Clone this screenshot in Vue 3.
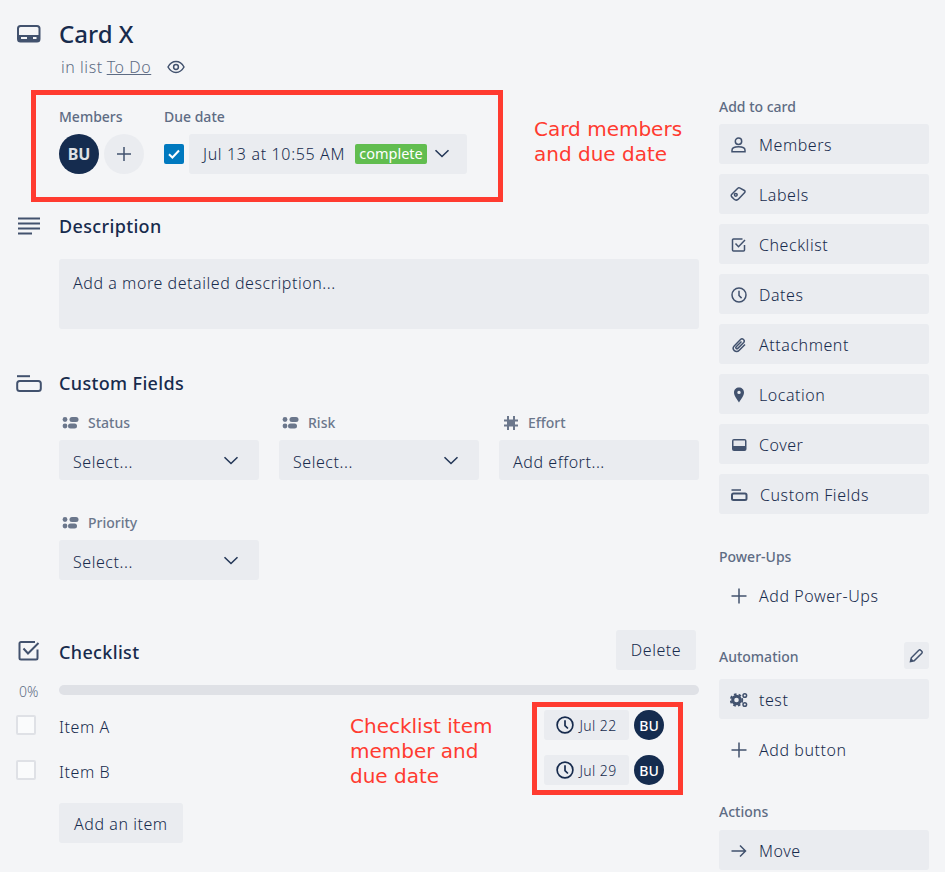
<template>
  <div class="page">
    <main class="main">
      <!-- Title -->
      <div class="row title-row">
        <svg class="gutter-icon" width="24" height="18" viewBox="0 0 24 18">
          <rect x="1" y="1" width="21.5" height="15.5" rx="2.5" class="ln-2" />
          <path d="M1 10h21.500v4.500a2 2 0 0 1-2 2H3a2 2 0 0 1-2-2z" class="fl" />
          <rect x="4" y="12" width="6" height="2" fill="#f4f5f7" />
          <rect x="16" y="12" width="3.500" height="2" fill="#f4f5f7" />
        </svg>
        <h1>Card X</h1>
      </div>
      <div class="row subtitle">
        <span></span>
        <div class="subtitle-text">
          <span>in list</span>
          <u>To Do</u>
          <svg class="eye" width="18" height="14" viewBox="0 0 18 14">
            <path d="M1 7c2-3.600 4.800-5.400 8-5.400s6 1.800 8 5.400c-2 3.600-4.800 5.400-8 5.400S3 10.600 1 7z" class="ln-15" />
            <circle cx="9" cy="7" r="2.400" class="ln-15" />
          </svg>
        </div>
      </div>

      <!-- Members and due date -->
      <div class="row meta">
        <span></span>
        <div class="meta-cols">
          <div>
            <div class="label">Members</div>
            <div class="members">
              <span class="avatar">BU</span>
              <span class="add-member">
                <svg width="16" height="16" viewBox="0 0 16 16"><path d="M8 1v14M1 8h14" class="ln-15" /></svg>
              </span>
            </div>
          </div>
          <div>
            <div class="label">Due date</div>
            <div class="due">
              <span class="check">
                <svg width="14" height="12" viewBox="0 0 14 12"><path d="M2 6.300l3.400 3.200L12 2.500" fill="none" stroke="#fff" stroke-width="2" /></svg>
              </span>
              <div class="due-btn">
                <span class="due-text">Jul 13 at 10:55 AM</span>
                <span class="complete">complete</span>
                <svg class="chevron" width="16" height="9" viewBox="0 0 16 9"><path d="M1.500 1.200L8 7.500l6.500-6.300" class="chev" /></svg>
              </div>
            </div>
          </div>
        </div>
      </div>

      <!-- Description -->
      <div class="row heading desc-heading">
        <svg class="gutter-icon" width="24" height="18" viewBox="0 0 24 18">
          <path d="M1 1.500h22M1 6.500h22M1 11.500h22M1 16.500h14" class="ln-2" />
        </svg>
        <h2>Description</h2>
      </div>
      <div class="row desc-box-row">
        <span></span>
        <div class="desc-box">Add a more detailed description...</div>
      </div>

      <!-- Custom fields -->
      <div class="row heading cf-heading">
        <svg class="gutter-icon gutter-wide" width="26" height="17" viewBox="0 0 26 17">
          <path d="M1 1.200h13" class="ln-2" />
          <rect x="1.200" y="6" width="23.600" height="10" rx="2.500" class="ln-2" />
        </svg>
        <h2>Custom Fields</h2>
      </div>
      <div class="row">
        <span></span>
        <div class="fields">
          <div v-for="f in fields" :key="f.name" class="field">
            <div class="field-label">
              <svg v-if="f.select" width="18" height="14" viewBox="0 0 18 14">
                <circle cx="3" cy="3.500" r="2.400" class="fl2" />
                <rect x="7.500" y="1" width="9" height="5" rx="2.500" class="fl2" />
                <circle cx="3" cy="10" r="2.400" class="fl2" />
                <rect x="6" y="7.500" width="9" height="5" rx="2.500" class="fl2" />
              </svg>
              <svg v-else width="18" height="14" viewBox="0 0 18 14">
                <path d="M6 0v14M12 0v14M2 4.500h14M2 9.500h14" fill="none" stroke="#6b778c" stroke-width="2" />
                <rect x="6" y="4.500" width="6" height="5" class="fl2" />
              </svg>
              <span>{{ f.name }}</span>
            </div>
            <div class="field-box">
              <span>{{ f.placeholder }}</span>
              <svg v-if="f.select" width="16" height="9" viewBox="0 0 16 9"><path d="M1.500 1.200L8 7.500l6.500-6.300" class="chev" /></svg>
            </div>
          </div>
        </div>
      </div>

      <!-- Checklist -->
      <div class="row heading checklist-heading">
        <svg class="gutter-icon gutter-check" width="22" height="20" viewBox="0 0 22 20">
          <path d="M19.500 8.500V17a1.500 1.500 0 0 1-1.500 1.500H3A1.500 1.500 0 0 1 1.500 17V2.500A1.500 1.500 0 0 1 3 1h14" class="ln-2" />
          <path d="M5.500 7.500l4.500 5L20.500 2" class="ln-2" />
        </svg>
        <div class="checklist-title">
          <h2>Checklist</h2>
          <button class="btn delete">Delete</button>
        </div>
      </div>
      <div class="row progress">
        <span class="percent">0%</span>
        <div class="bar"></div>
      </div>
      <div v-for="item in items" :key="item.name" class="row item">
        <span class="item-check"></span>
        <div class="item-body">
          <span class="item-name">{{ item.name }}</span>
          <span class="pill">
            <svg width="18" height="18" viewBox="0 0 16 16">
              <circle cx="8" cy="8" r="7" class="ln-15 dark" />
              <path d="M8 3.800V8.500l2.600 2.600" class="ln-15 dark" />
            </svg>
            {{ item.date }}
          </span>
          <span class="avatar avatar-sm">BU</span>
        </div>
      </div>
      <div class="row add-item">
        <span></span>
        <div><button class="btn">Add an item</button></div>
      </div>
    </main>

    <aside class="side">
      <h3>Add to card</h3>
      <div class="side-list">
        <div class="side-btn">
          <svg width="16" height="16" viewBox="0 0 16 16">
            <circle cx="7.500" cy="4.200" r="3.200" class="ln-15" />
            <path d="M1 14.800v-1.600C1 10.700 4 9.800 7.500 9.800s6.500.9 6.500 3.400v1.600z" class="ln-15" />
          </svg>
          Members
        </div>
        <div class="side-btn">
          <svg class="tag" width="17" height="17" viewBox="0 0 17 17">
            <path d="M1.800 8.200L7.800 2.200a1.500 1.500 0 0 1 1.800-.3l4.800 2.600a1.200 1.200 0 0 1 .3 1.900L8.800 12.800a3.500 3.500 0 0 1-4.900.2L1.800 10.900a1.900 1.900 0 0 1 0-2.700z" class="ln-15" />
            <circle cx="5.800" cy="8.800" r="1.400" class="ln-15" />
          </svg>
          Labels
        </div>
        <div class="side-btn">
          <svg width="16" height="16" viewBox="0 0 16 16">
            <path d="M13.500 8v5a1 1 0 0 1-1 1h-10a1 1 0 0 1-1-1V3a1 1 0 0 1 1-1h9" class="ln-15" />
            <path d="M4.500 6.500l3 3.200 6.500-6.700" class="ln-15" />
          </svg>
          Checklist
        </div>
        <div class="side-btn">
          <svg width="16" height="16" viewBox="0 0 16 16">
            <circle cx="8" cy="8" r="7" class="ln-15" />
            <path d="M8 3.800V8.500l2.600 2.600" class="ln-15" />
          </svg>
          Dates
        </div>
        <div class="side-btn">
          <svg width="16" height="16" viewBox="0 0 16 16">
            <path d="M14 7.500l-6 6a3.200 3.200 0 0 1-4.800-4.500l6.300-6.500a2.200 2.200 0 0 1 3.200 3L6.800 11.400a1.100 1.100 0 0 1-1.600-1.600L10.500 4.500" class="ln-15" />
          </svg>
          Attachment
        </div>
        <div class="side-btn">
          <svg width="16" height="16" viewBox="0 0 16 16">
            <path fill-rule="evenodd" d="M8 .5c2.800 0 5 2.100 5 4.900 0 3.100-3 7-5 10-2-3-5-6.900-5-10C3 2.600 5.200.5 8 .5zm0 3.200a1.700 1.700 0 1 0 0 3.400 1.700 1.700 0 0 0 0-3.400z" class="fl" />
          </svg>
          Location
        </div>
        <div class="side-btn">
          <svg width="16" height="16" viewBox="0 0 16 16">
            <rect x="1" y="2" width="14.500" height="12" rx="2" class="fl" />
            <rect x="2.500" y="3.500" width="11.500" height="5.500" fill="#e4e6eb" />
          </svg>
          Cover
        </div>
        <div class="side-btn">
          <svg width="17" height="16" viewBox="0 0 17 16">
            <path d="M.5 3h9.500" class="ln-15" />
            <rect x="1" y="6.500" width="14.500" height="6.500" rx="1.500" class="ln-2" />
          </svg>
          Custom Fields
        </div>
      </div>

      <h3 class="side-gap">Power-Ups</h3>
      <div class="side-btn side-plain">
        <svg width="16" height="16" viewBox="0 0 16 16"><path d="M8 .5v15M.5 8h15" class="ln-15" /></svg>
        Add Power-Ups
      </div>

      <div class="auto-head">
        <h3>Automation</h3>
        <span class="edit">
          <svg width="15" height="15" viewBox="0 0 15 15">
            <path d="M1.500 13.500l.8-3.700 7.500-7.600a1.300 1.300 0 0 1 1.900 0l1.100 1.100a1.300 1.300 0 0 1 0 1.900l-7.600 7.500z" class="ln-15" />
            <path d="M1.500 13.500l.7-3.200 2.500 2.500z" class="fl" />
          </svg>
        </span>
      </div>
      <div class="side-list">
        <div class="side-btn">
          <svg class="gears" width="18" height="16" viewBox="0 0 18 16">
            <circle cx="6.500" cy="8" r="3.800" fill="none" stroke="#42526e" stroke-width="3" />
            <circle cx="6.500" cy="8" r="5.800" fill="none" stroke="#42526e" stroke-width="1.800" stroke-dasharray="2.600 2.200" />
            <circle cx="14.800" cy="3.500" r="1.800" class="ln-15" />
            <circle cx="14.800" cy="12.500" r="1.800" class="ln-15" />
          </svg>
          test
        </div>
        <div class="side-btn side-plain">
          <svg width="16" height="16" viewBox="0 0 16 16"><path d="M8 .5v15M.5 8h15" class="ln-15" /></svg>
          Add button
        </div>
      </div>

      <h3 class="side-gap">Actions</h3>
      <div class="side-btn">
        <svg width="16" height="16" viewBox="0 0 16 16"><path d="M.5 8h14M9 2.500L14.500 8 9 13.500" class="ln-15" /></svg>
        Move
      </div>
    </aside>

    <!-- Red annotations drawn over the screenshot -->
    <div class="mark mark-card"></div>
    <div class="mark mark-items"></div>
    <div class="note note-card">Card members<br />and due date</div>
    <div class="note note-items">Checklist item<br />member and<br />due date</div>
  </div>
</template>

<script setup>
const fields = [
  { name: 'Status', placeholder: 'Select...', select: true },
  { name: 'Risk', placeholder: 'Select...', select: true },
  { name: 'Effort', placeholder: 'Add effort...', select: false },
  { name: 'Priority', placeholder: 'Select...', select: true }
]

const items = [
  { name: 'Item A', date: 'Jul 22' },
  { name: 'Item B', date: 'Jul 29' }
]
</script>

<style>
html, body {
  background: #f4f5f7;
}
</style>

<style scoped>
.page {
  position: relative;
  display: flex;
  width: 945px;
  height: 872px;
  overflow: hidden;
  background: #f4f5f7;
  color: #172b4d;
  font-family: "Noto Sans", "Open Sans", sans-serif;
  font-size: 16px;
  font-weight: 300;
  letter-spacing: 0.55px;
}

.main {
  width: 699px;
  flex: none;
}

.row {
  display: grid;
  grid-template-columns: 59px 640px;
}

/* svg helpers */
.ln-15, .ln-2, .chev {
  fill: none;
  stroke: #42526e;
  stroke-width: 1.5;
}
.ln-2 { stroke-width: 2; }
.chev { stroke: #253858; stroke-width: 1.6; }
.dark { stroke: #172b4d; }
.fl { fill: #42526e; }
.fl2 { fill: #6b778c; }

.gutter-icon {
  margin-left: 16.5px;
  align-self: center;
}
.gutter-wide { margin-left: 15.5px; }
.gutter-check { margin-left: 18px; }

/* Title */
.title-row {
  margin-top: 18px;
  height: 32px;
  align-items: center;
}
.title-row .gutter-icon { margin-top: -1px; }
h1 {
  margin: 0;
  font-size: 24px;
  line-height: 32px;
  font-weight: 500;
  letter-spacing: 0;
  color: #172b4d;
}
.subtitle {
  margin-top: 5px;
  height: 24px;
}
.subtitle-text {
  display: flex;
  align-items: center;
  padding-left: 2px;
  line-height: 24px;
  color: #5e6c84;
}
.subtitle-text u { margin-left: 4px; }
.eye { margin-left: 16px; }

/* Members / due date */
.meta { margin-top: 28px; }
.meta-cols {
  display: flex;
  gap: 20px;
}
.label {
  font-size: 14px;
  line-height: 20px;
  font-weight: 500;
  letter-spacing: 0;
  color: #5e6c84;
}
.members, .due {
  display: flex;
  align-items: center;
  gap: 5px;
  margin-top: 7px;
  height: 40px;
}
.avatar {
  display: flex;
  align-items: center;
  justify-content: center;
  width: 40px;
  height: 40px;
  border-radius: 50%;
  background: #152c4f;
  color: #dfe1e6;
  font-size: 16px;
  font-weight: 700;
  letter-spacing: 0;
}
.add-member {
  display: flex;
  align-items: center;
  justify-content: center;
  width: 40px;
  height: 40px;
  border-radius: 50%;
  background: #eaecf0;
}
.check {
  display: flex;
  align-items: center;
  justify-content: center;
  width: 20px;
  height: 20px;
  background: #0079bf;
  border-radius: 2px;
}
.due-btn {
  display: flex;
  align-items: center;
  width: 278px;
  height: 40px;
  padding-left: 14px;
  box-sizing: border-box;
  background: #eaecf0;
  border-radius: 3px;
}
.due-text { width: 152px; flex: none; letter-spacing: 0.65px; white-space: nowrap; }
.complete {
  width: 72px;
  height: 20px;
  line-height: 19px;
  text-align: center;
  background: #61bd4f;
  color: #fff;
  font-size: 14.5px;
  font-weight: 400;
  letter-spacing: 0;
  border-radius: 2px;
}
.chevron { margin-left: 7px; margin-top: -2px; }

/* Section headings */
.heading { align-items: center; }
h2 {
  margin: 0;
  font-size: 18px;
  line-height: 24px;
  font-weight: 500;
  letter-spacing: 0.35px;
  color: #172b4d;
}
.desc-heading { margin-top: 40px; height: 24px; }
.desc-box-row { margin-top: 21px; }
.desc-box {
  height: 70px;
  padding: 13px 14px;
  box-sizing: border-box;
  background: #eaecf0;
  border-radius: 3px;
  line-height: 22px;
}
.cf-heading { margin-top: 42px; height: 24px; }

/* Custom fields */
.fields {
  display: grid;
  grid-template-columns: repeat(3, 200px);
  column-gap: 20px;
  row-gap: 33px;
  margin-top: 18px;
}
.field-label {
  display: flex;
  align-items: center;
  gap: 8px;
  padding-left: 3px;
  height: 20px;
  font-size: 14px;
  font-weight: 500;
  letter-spacing: 0;
  color: #6b778c;
}
.field-label span { margin-top: -2px; }
.field-box {
  display: flex;
  align-items: center;
  justify-content: space-between;
  margin-top: 7px;
  height: 40px;
  padding: 3px 20px 0 14px;
  box-sizing: border-box;
  background: #eaecf0;
  border-radius: 3px;
}
.field-box svg { margin-top: -3px; }

/* Checklist */
.checklist-heading { margin-top: 50px; height: 40px; }
.checklist-heading .gutter-check { margin-top: 2px; }
.checklist-title {
  display: flex;
  align-items: center;
  justify-content: space-between;
  padding-right: 3px;
}
.checklist-title h2 { margin-top: 4px; }
.btn {
  height: 40px;
  padding: 2px 15px 0;
  border: none;
  border-radius: 3px;
  background: #eaecf0;
  color: #172b4d;
  font: inherit;
  letter-spacing: inherit;
}
.delete { width: 80px; padding: 0; }
.progress {
  margin-top: 15px;
  height: 10px;
  grid-template-rows: 10px;
  align-items: center;
}
.percent {
  padding-left: 19px;
  font-size: 14px;
  line-height: 10px;
  letter-spacing: 0;
  color: #5e6c84;
  margin-top: 4px;
}
.bar {
  height: 10px;
  border-radius: 5px;
  background: #dfe1e6;
}
.item {
  margin-top: 15px;
  height: 30px;
  align-items: center;
}
.item-check {
  width: 20px;
  height: 20px;
  margin-left: 16px;
  box-sizing: border-box;
  border: 2px solid #dfe1e6;
  border-radius: 2px;
  background: #fafbfc;
}
.item-body {
  display: flex;
  align-items: center;
  gap: 5px;
  padding-right: 35px;
}
.item-name { margin-right: auto; margin-top: 3px; }
.pill {
  display: flex;
  align-items: center;
  justify-content: center;
  gap: 5px;
  width: 85px;
  height: 30px;
  background: #eaecf0;
  border-radius: 3px;
  font-size: 14px;
  letter-spacing: 0.4px;
}
.avatar-sm {
  width: 30px;
  height: 30px;
  font-size: 14px;
  font-weight: 500;
  color: #fff;
}
.add-item { margin-top: 18px; }

/* Sidebar */
.side {
  width: 210px;
  flex: none;
  margin-left: 20px;
  padding-top: 97px;
}
h3 {
  margin: 0 0 7px;
  font-size: 14px;
  line-height: 20px;
  font-weight: 500;
  letter-spacing: 0;
  color: #5e6c84;
}
.side-list {
  display: flex;
  flex-direction: column;
  gap: 10px;
}
.side-btn {
  display: flex;
  align-items: center;
  gap: 12px;
  height: 40px;
  padding: 1px 0 0 12px;
  box-sizing: border-box;
  background: #eaecf0;
  border-radius: 3px;
}
.side-btn svg { flex: none; }
.side-btn .tag { margin-left: -1px; }
.side-btn .gears { margin-left: -1px; margin-right: -1px; }
.side-plain { background: none; }
.side-gap { margin-top: 33px; margin-bottom: 8px; }
.auto-head {
  display: flex;
  align-items: center;
  justify-content: space-between;
  margin-top: 27px;
  margin-bottom: 10px;
  height: 27px;
}
.auto-head h3 { margin: 2px 0 0; }
.edit {
  display: flex;
  align-items: center;
  justify-content: center;
  width: 25px;
  height: 27px;
  border-radius: 3px;
  background: #eaecf0;
}

/* Annotations */
.mark {
  position: absolute;
  box-sizing: border-box;
  border: 5px solid #ff3b30;
}
.mark-card { left: 31px; top: 90px; width: 472px; height: 112px; }
.mark-items { left: 532px; top: 702px; width: 151px; height: 93px; }
.note {
  position: absolute;
  color: #ff3b30;
  font-family: "DejaVu Sans", sans-serif;
  font-size: 20px;
  font-weight: 400;
  letter-spacing: 0;
  line-height: 25px;
}
.note-card { left: 534px; top: 117px; }
.note-items { left: 350px; top: 714px; }
</style>
